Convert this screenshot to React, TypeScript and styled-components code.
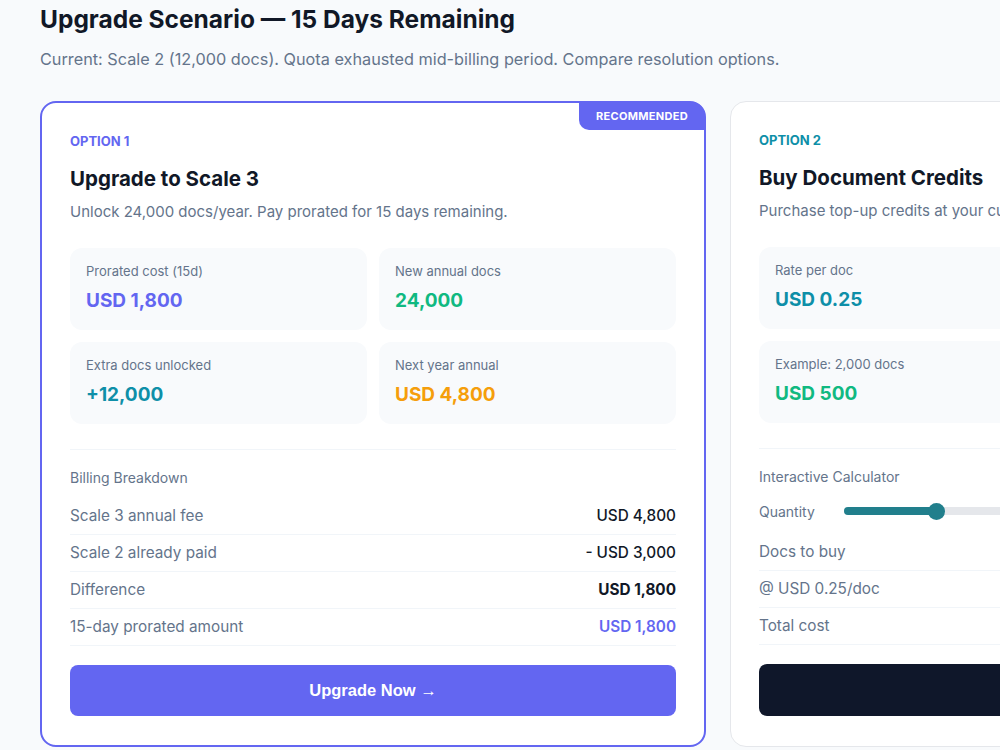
import styled, { createGlobalStyle } from 'styled-components';

const GlobalStyle = createGlobalStyle`
  html, body {
    margin: 0;
    padding: 0;
    overflow: hidden;
    background: #f8fafc;
  }
  body {
    font-family: Inter, "Noto Sans", sans-serif;
    color: #0f172a;
  }
`;

const Page = styled.div`
  padding: 3px 40px 40px;
`;

const Title = styled.h1`
  margin: 0;
  font-size: 24.5px;
  line-height: 32px;
  font-weight: 700;
  color: #111827;
`;

const Subtitle = styled.p`
  margin: 12px 0 0;
  font-size: 16.25px;
  line-height: 24px;
  color: #64748b;
`;

const Cards = styled.div`
  display: grid;
  grid-template-columns: repeat(2, 666px);
  gap: 24px;
  margin-top: 30px;
`;

const Card = styled.div<{ $featured?: boolean }>`
  position: relative;
  display: flex;
  flex-direction: column;
  background: #ffffff;
  border: ${({ $featured }) => ($featured ? '2px solid #6366f1' : '1px solid #e5e7eb')};
  border-radius: 16px;
  padding: 28px 28px 29px;
`;

const Badge = styled.div`
  position: absolute;
  top: -1px;
  right: -1px;
  background: #6366f1;
  color: #ffffff;
  font-size: 11px;
  font-weight: 700;
  letter-spacing: 0.3px;
  line-height: 28px;
  padding: 0 17px;
  border-radius: 0 14px 0 10px;
`;

const OptionLabel = styled.div<{ $color: string }>`
  font-size: 13px;
  line-height: 20px;
  font-weight: 700;
  text-transform: uppercase;
  color: ${({ $color }) => $color};
`;

const CardTitle = styled.h2`
  margin: 14px 0 0;
  font-size: 20.5px;
  line-height: 28px;
  font-weight: 700;
  color: #111827;
`;

const CardDesc = styled.p`
  margin: 8px 0 0;
  font-size: 15px;
  line-height: 22px;
  color: #64748b;
  white-space: nowrap;
`;

const StatGrid = styled.div`
  display: grid;
  grid-template-columns: 1fr 1fr;
  gap: 12px;
  margin-top: 25px;
`;

const Stat = styled.div`
  background: #f8fafc;
  border-radius: 12px;
  padding: 14px 16px 16px;
`;

const StatLabel = styled.div`
  font-size: 13px;
  line-height: 18px;
  color: #64748b;
`;

const StatValue = styled.div<{ $color: string }>`
  margin-top: 8px;
  font-size: 19px;
  line-height: 26px;
  font-weight: 700;
  color: ${({ $color }) => $color};
`;

const Divider = styled.hr`
  border: none;
  border-top: 1px solid #f1f5f9;
  margin: 25px 0 0;
`;

const SectionHeading = styled.div`
  margin-top: 18px;
  font-size: 14px;
  line-height: 20px;
  color: #64748b;
`;

const Rows = styled.div`
  margin-top: 10px;
  display: flex;
  flex-direction: column;
`;

const Row = styled.div`
  display: flex;
  justify-content: space-between;
  align-items: center;
  padding: 8px 0;
  line-height: 20px;
  font-size: 15.3px;
  border-bottom: 1px solid #f1f5f9;
`;

const RowLabel = styled.span`
  color: #64748b;
`;

const RowValue = styled.span<{ $tone?: 'plain' | 'strong' | 'accent' }>`
  color: ${({ $tone }) => ($tone === 'accent' ? '#6366f1' : '#111827')};
  font-weight: ${({ $tone }) => ($tone === 'strong' ? 700 : $tone === 'accent' ? 600 : 500)};
`;

const SliderRow = styled.div`
  display: flex;
  align-items: center;
  gap: 15px;
  margin-top: 12px;
  height: 24px;
  font-size: 14px;
  color: #64748b;
`;

const SliderLabel = styled.span`
  min-width: 70px;
`;

const Track = styled.div`
  position: relative;
  flex: 1;
  height: 8px;
  border-radius: 4px;
  background: #e5e7eb;
`;

const Fill = styled.div`
  height: 100%;
  border-radius: 4px;
  background: #217f8c;
`;

const Thumb = styled.div`
  position: absolute;
  top: 50%;
  width: 17px;
  height: 17px;
  margin-left: -8px;
  margin-top: -8.5px;
  border-radius: 50%;
  background: #217f8c;
`;

const SliderValue = styled.span`
  min-width: 50px;
  text-align: right;
  font-weight: 600;
  color: #111827;
`;

const CalcRows = styled(Rows)`
  margin-top: 11px;
`;

const ActionButton = styled.button<{ $dark?: boolean }>`
  margin-top: 19px;
  height: ${({ $dark }) => ($dark ? '52px' : '51px')};
  border: none;
  border-radius: 8px;
  background: ${({ $dark }) => ($dark ? '#0f172a' : '#6366f1')};
  color: #ffffff;
  font-family: "Liberation Sans", Arial, sans-serif;
  font-size: 16.5px;
  font-weight: 700;
  cursor: pointer;
`;

const quantity = 2000;
const maxQuantity = 10000;
const rate = 0.25;

const App = () => {
  const pct = (quantity / maxQuantity) * 100;
  return (
    <>
      <GlobalStyle />
      <Page>
        <Title>Upgrade Scenario — 15 Days Remaining</Title>
        <Subtitle>
          Current: Scale 2 (12,000 docs). Quota exhausted mid-billing period. Compare resolution options.
        </Subtitle>
        <Cards>
          <Card $featured>
            <Badge>RECOMMENDED</Badge>
            <OptionLabel $color="#6366f1">Option 1</OptionLabel>
            <CardTitle>Upgrade to Scale 3</CardTitle>
            <CardDesc>Unlock 24,000 docs/year. Pay prorated for 15 days remaining.</CardDesc>
            <StatGrid>
              <Stat>
                <StatLabel>Prorated cost (15d)</StatLabel>
                <StatValue $color="#6366f1">USD 1,800</StatValue>
              </Stat>
              <Stat>
                <StatLabel>New annual docs</StatLabel>
                <StatValue $color="#10b981">24,000</StatValue>
              </Stat>
              <Stat>
                <StatLabel>Extra docs unlocked</StatLabel>
                <StatValue $color="#0e8fa8">+12,000</StatValue>
              </Stat>
              <Stat>
                <StatLabel>Next year annual</StatLabel>
                <StatValue $color="#f59e0b">USD 4,800</StatValue>
              </Stat>
            </StatGrid>
            <Divider />
            <SectionHeading>Billing Breakdown</SectionHeading>
            <Rows>
              <Row>
                <RowLabel>Scale 3 annual fee</RowLabel>
                <RowValue>USD 4,800</RowValue>
              </Row>
              <Row>
                <RowLabel>Scale 2 already paid</RowLabel>
                <RowValue>- USD 3,000</RowValue>
              </Row>
              <Row>
                <RowLabel>Difference</RowLabel>
                <RowValue $tone="strong">USD 1,800</RowValue>
              </Row>
              <Row>
                <RowLabel>15-day prorated amount</RowLabel>
                <RowValue $tone="accent">USD 1,800</RowValue>
              </Row>
            </Rows>
            <ActionButton>Upgrade Now →</ActionButton>
          </Card>

          <Card>
            <OptionLabel $color="#0e8fa8">Option 2</OptionLabel>
            <CardTitle>Buy Document Credits</CardTitle>
            <CardDesc>Purchase top-up credits at your current plan rate. No upgrade needed.</CardDesc>
            <StatGrid>
              <Stat>
                <StatLabel>Rate per doc</StatLabel>
                <StatValue $color="#0e8fa8">USD 0.25</StatValue>
              </Stat>
              <Stat>
                <StatLabel>Minimum purchase</StatLabel>
                <StatValue $color="#6366f1">500 docs</StatValue>
              </Stat>
              <Stat>
                <StatLabel>Example: 2,000 docs</StatLabel>
                <StatValue $color="#10b981">USD 500</StatValue>
              </Stat>
              <Stat>
                <StatLabel>Credits expire</StatLabel>
                <StatValue $color="#f59e0b">End of term</StatValue>
              </Stat>
            </StatGrid>
            <Divider />
            <SectionHeading>Interactive Calculator</SectionHeading>
            <SliderRow>
              <SliderLabel>Quantity</SliderLabel>
              <Track>
                <Fill style={{ width: `${pct}%` }} />
                <Thumb style={{ left: `${pct}%` }} />
              </Track>
              <SliderValue>{quantity.toLocaleString('en-US')}</SliderValue>
            </SliderRow>
            <CalcRows>
              <Row>
                <RowLabel>Docs to buy</RowLabel>
                <RowValue>{quantity.toLocaleString('en-US')}</RowValue>
              </Row>
              <Row>
                <RowLabel>@ USD 0.25/doc</RowLabel>
                <RowValue>× {quantity.toLocaleString('en-US')}</RowValue>
              </Row>
              <Row>
                <RowLabel>Total cost</RowLabel>
                <RowValue $tone="strong">USD {quantity * rate}</RowValue>
              </Row>
            </CalcRows>
            <ActionButton $dark>Buy Credits →</ActionButton>
          </Card>
        </Cards>
      </Page>
    </>
  );
};

export default App;
